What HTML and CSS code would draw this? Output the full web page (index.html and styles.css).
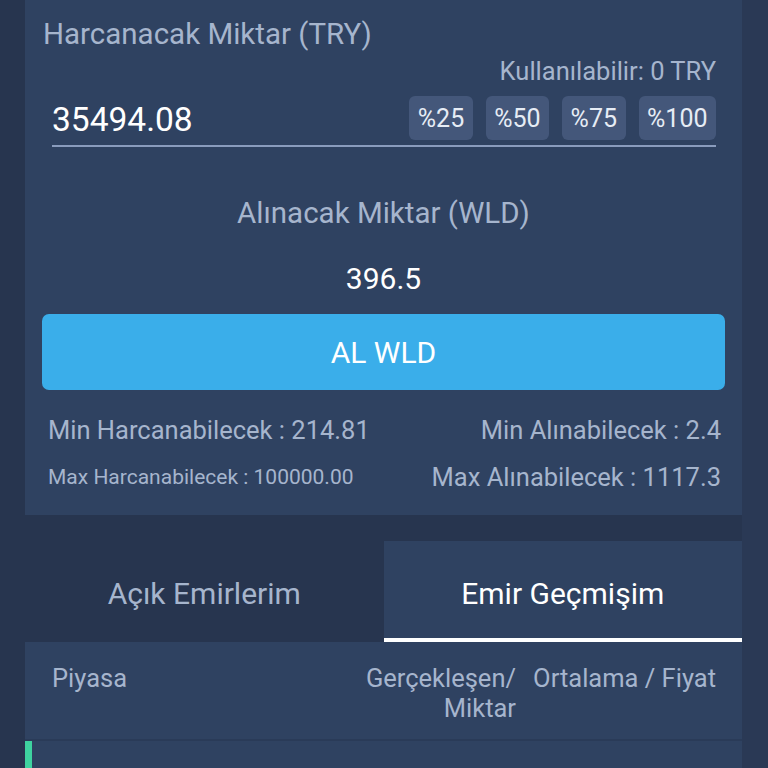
FILE: index.html
```html
<!DOCTYPE html>
<html>
    <head>
        <meta charset="UTF-8">
        <title>WLD Al</title>
        <link rel="stylesheet" href="styles.css">
    </head>
    <body>
        <main class="page">
            <!-- alış formu -->
            <section class="card">
                <div class="title">Harcanacak Miktar (TRY)</div>
                <div class="avail">Kullanılabilir: 0 TRY</div>
                <div class="amount-row">
                    <span class="amount">35494.08</span>
                    <button class="pct">%25</button>
                    <button class="pct">%50</button>
                    <button class="pct">%75</button>
                    <button class="pct">%100</button>
                </div>
                <div class="receive-label">Alınacak Miktar (WLD)</div>
                <div class="receive-value">396.5</div>
                <button class="buy-btn">AL WLD</button>
                <div class="limits">
                    <span class="big">Min Harcanabilecek : 214.81</span>
                    <span class="big right">Min Alınabilecek : 2.4</span>
                    <span class="small">Max Harcanabilecek : 100000.00</span>
                    <span class="big right">Max Alınabilecek : 1117.3</span>
                </div>
            </section>

            <!-- emir sekmeleri -->
            <nav class="tabs">
                <button class="tab">Açık Emirlerim</button>
                <button class="tab active">Emir Geçmişim</button>
            </nav>
            <div class="table-head">
                <span>Piyasa</span>
                <span class="right">Gerçekleşen/<br>Miktar</span>
                <span class="right">Ortalama / Fiyat</span>
            </div>
            <div class="order-row"></div>
        </main>
    </body>
</html>
```

FILE: styles.css
```css
:root{
    --bg: #27354f;
    --card: #2f4261;
    --label: #a6b5cd;
    --pctBg: #44577a;
    --blue: #3aaeea;
    --green: #3ed3a0;
}

body{
    margin: 0;
    background: linear-gradient(to right, var(--bg) 742px, #2a3955 742px);
    font-family: Roboto, "Noto Sans", sans-serif;
    color: var(--label);
    overflow: hidden;
}
button{
    font-family: inherit;
    border: none;
    cursor: pointer;
}

.page{
    width: 717px;
    margin-left: 25px;
    background-color: var(--bg);
}

/*------------ alış kartı ------------*/
.card{
    background-color: var(--card);
    padding: 14px 17px 22px;
}
.title{
    margin-left: 1px;
    font-size: 29.5px;
    line-height: 40px;
}
.avail{
    margin-right: 9px;
    text-align: right;
    font-size: 25.5px;
    line-height: 34px;
}
.amount-row{
    display: flex;
    align-items: center;
    gap: 13px;
    margin: 0 9px 0 10px;
    padding: 8px 0 5px;
    border-bottom: 2px solid #8a9cbd;
}
.amount{
    flex: 1;
    padding-top: 4px;
    font-size: 33.5px;
    line-height: 40px;
    color: white;
}
.pct{
    height: 44px;
    padding: 0 8.5px;
    border-radius: 6px;
    font-size: 25px;
    color: #e6ecf5;
    background-color: var(--pctBg);
}
.receive-label{
    margin-top: 46px;
    text-align: center;
    font-size: 29.5px;
    line-height: 40px;
}
.receive-value{
    margin-top: 26px;
    text-align: center;
    font-size: 30px;
    line-height: 40px;
    color: white;
}
.buy-btn{
    display: block;
    width: 100%;
    height: 76px;
    margin-top: 15px;
    border-radius: 7px;
    font-size: 30px;
    color: white;
    background-color: var(--blue);
}
.limits{
    display: grid;
    grid-template-columns: 1fr 1fr;
    row-gap: 15px;
    margin: 24px 4px 0 6px;
    align-items: center;
}
.limits span{line-height: 32px;}
.big{font-size: 25.5px;}
.small{font-size: 21px;}
.right{text-align: right;}

/*------------ sekmeler ------------*/
.tabs{
    display: flex;
    margin-top: 26px;
}
.tab{
    flex: 1;
    height: 101px;
    padding-top: 4px;
    font-size: 30px;
    color: var(--label);
    background-color: transparent;
}
.tab.active{
    padding-top: 8px;
    color: white;
    background-color: var(--card);
    border-bottom: 4px solid white;
}

.table-head{
    display: grid;
    grid-template-columns: 1fr 180px 200px;
    padding: 21px 26px 16px 27px;
    font-size: 25.5px;
    line-height: 30px;
    background-color: var(--card);
    border-bottom: 2px solid #2a3b58;
}
.order-row{
    height: 60px;
    background-color: var(--card);
    border-left: 7px solid var(--green);
}
```
